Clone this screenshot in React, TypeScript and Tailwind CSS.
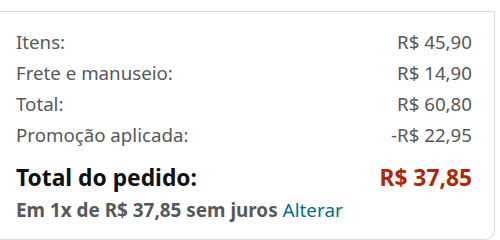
const rows = [
  { label: "Itens:", value: "R$ 45,90" },
  { label: "Frete e manuseio:", value: "R$ 14,90" },
  { label: "Total:", value: "R$ 60,80" },
  { label: "Promoção aplicada:", value: "-R$ 22,95" },
];

export default function App() {
  return (
    <div className="w-[500px] h-[240px] bg-white pt-[11px] overflow-hidden font-['Noto_Sans',sans-serif]">
      <div className="w-[495px] h-[229px] border-t border-r border-b border-[#dcdcdc] rounded-br-[10px] pl-4 pr-[22px] pt-[15px]">
        <div className="flex flex-col">
          {rows.map((r) => (
            <div
              key={r.label}
              className="flex justify-between items-center h-[31px] text-[18.7px] text-[#565959]"
            >
              <span>{r.label}</span>
              <span>{r.value}</span>
            </div>
          ))}
        </div>
        <div className="flex justify-between items-center mt-[12px] h-[30px] text-[22.8px] font-bold">
          <span className="text-[#0f1111]">Total do pedido:</span>
          <span className="text-[#b12704]">R$ 37,85</span>
        </div>
        <div className="mt-[3px] text-[18.9px] text-[#565959]">
          <span className="font-bold">Em 1x de R$ 37,85 sem juros</span>{" "}
          <span className="text-[#007185]">Alterar</span>
        </div>
      </div>
    </div>
  );
}
